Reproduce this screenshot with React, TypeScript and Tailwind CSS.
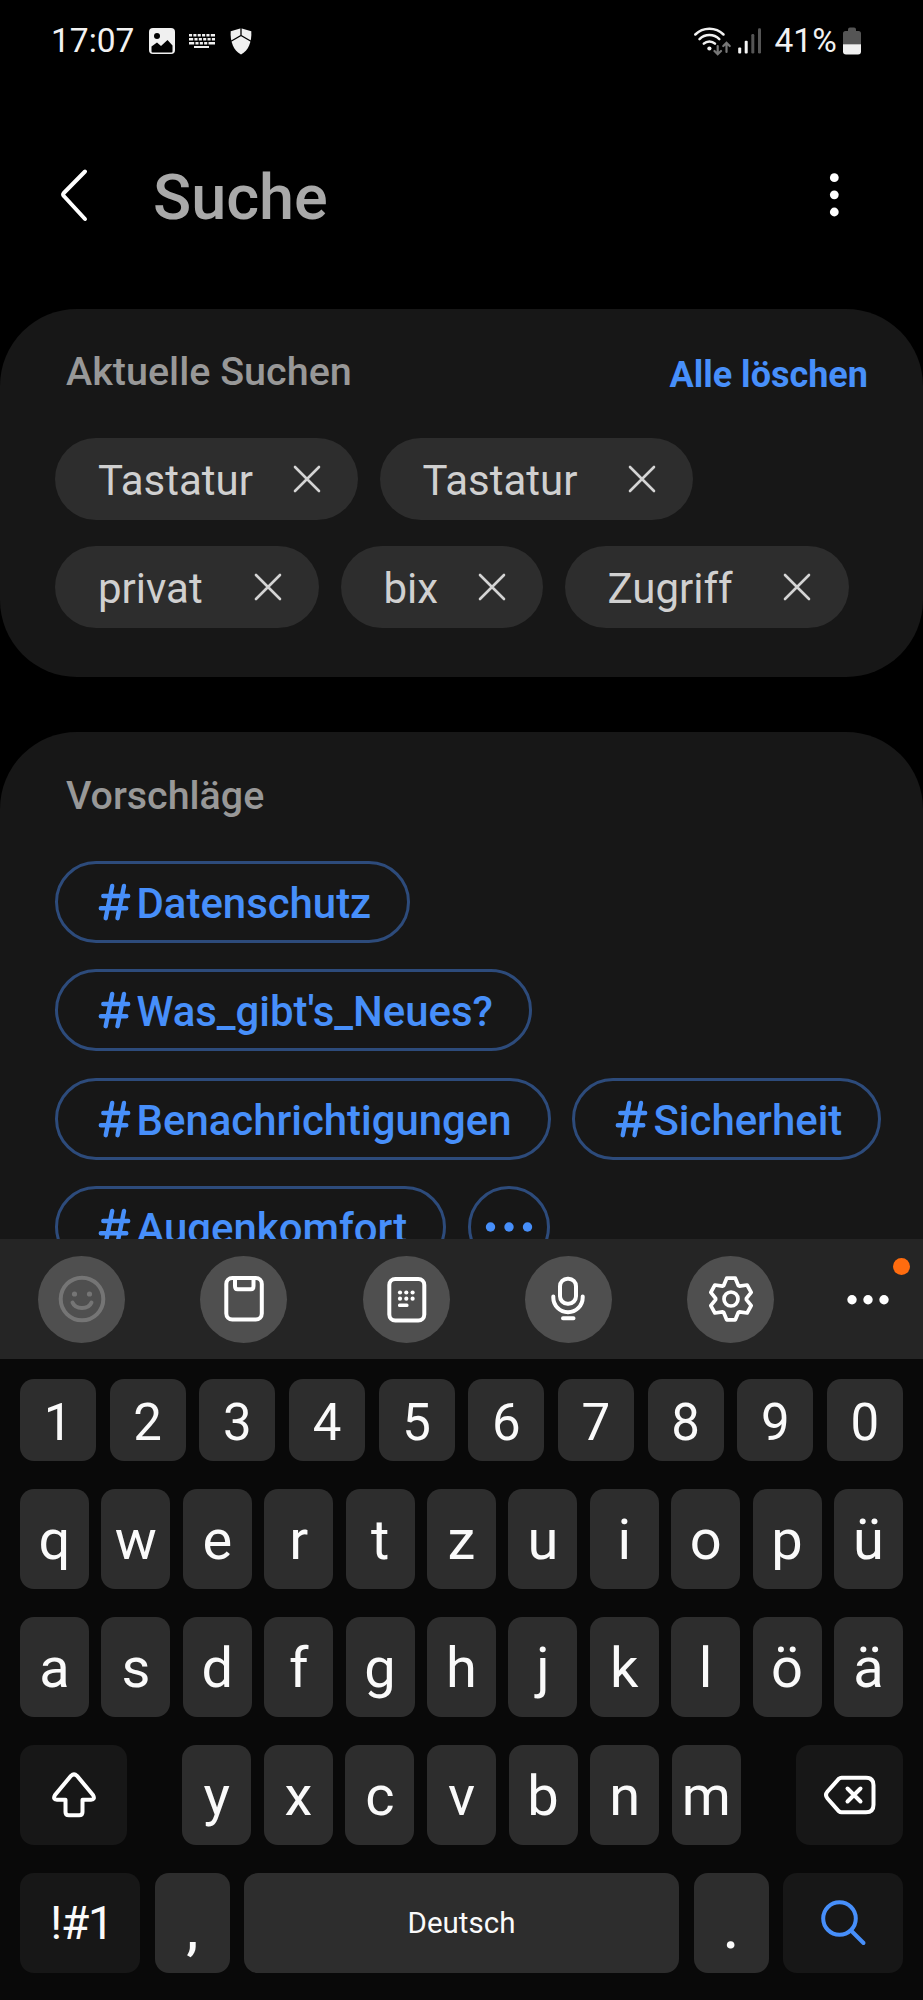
import type { ReactNode } from 'react';

function StatusBar() {
  return (
    <div className="flex h-[82px] shrink-0 items-center pl-[51px] text-[33.5px] leading-none text-[#f2f2f2]">
      <span className="w-[98px]">17:07</span>
      <svg width="26" height="26" viewBox="0 0 26 26" className="shrink-0">
        <rect width="26" height="26" rx="4" fill="#f0f0f0" />
        <path d="M2.5 18.5 8 14.5l4 3.5 6.5-6 5 5.5v6a1 1 0 0 1-1 1h-19a1 1 0 0 1-1-1Z" fill="#000" />
        <circle cx="8" cy="8" r="3" fill="#000" />
      </svg>
      <svg width="26" height="16" viewBox="0 0 26 16" className="ml-[14px] shrink-0" fill="none" stroke="#f0f0f0" strokeWidth="2.4">
        <path d="M0 2.2H26" strokeDasharray="3.1 1.25 3.1 1.25 3.1 1.25 3.1 1.25 3.1 1.25 5" />
        <path d="M0 6.2H26" strokeDasharray="4.2 1.25 3.1 1.25 3.1 1.25 3.1 1.25 3.1 1.25 5" />
        <path d="M0 10.2H26" strokeDasharray="5.2 1.25 3.1 1.25 3.1 1.25 3.1 1.25 8" />
        <path d="M5 14H20" strokeWidth="2" />
      </svg>
      <svg width="22" height="27" viewBox="0 0 22 27" className="ml-[15px] shrink-0">
        <path d="M11 .3 21.3 3.3C22 13 18.5 23 11 26.5 3.5 23 0 13 .7 3.3Z" fill="#f0f0f0" />
        <path d="M11 0v7.3M1 13.3 11 7.5l10 5.8" fill="none" stroke="#000" strokeWidth="1.3" />
      </svg>
      <svg width="38" height="30" viewBox="0 0 38 30" className="ml-[441px] shrink-0" fill="none" strokeLinecap="round">
        <g stroke="#f0f0f0" strokeWidth="2.5">
          <path d="M2.3 8.5A20 20 0 0 1 30.5 8.5" />
          <path d="M6.5 13.2A14 14 0 0 1 26.3 13.2" />
          <path d="M10.8 17.7A8 8 0 0 1 22 17.7" />
        </g>
        <circle cx="16.4" cy="22.5" r="2.1" fill="#f0f0f0" />
        <path d="M24.7 20v7.5M21.5 25l3.2 3.2L28 25M33.500 26v-8.5M30.3 20l3.2-3.2L36.7 20" stroke="#777" strokeWidth="2.2" />
      </svg>
      <svg width="24" height="26" viewBox="0 0 24 26" className="ml-[7px] shrink-0">
        <rect x=".2" y="19.5" width="3" height="6" rx="1" fill="#f5f5f5" />
        <rect x="6.7" y="12.8" width="3" height="12.7" rx="1" fill="#f5f5f5" />
        <rect x="13.3" y="6" width="3" height="19.5" rx="1.3" fill="#555" />
        <rect x="20" y=".3" width="3" height="25.2" rx="1.3" fill="#555" />
      </svg>
      <span className="ml-[12.5px] w-[68px]">41%</span>
      <svg width="18" height="28" viewBox="0 0 18 28" className="shrink-0">
        <path d="M5 2.500Q5 .5 7 .5h4Q13 .5 13 2.500V4h2.500Q18 4 18 6.500V17.500H0V6.500Q0 4 2.500 4H5Z" fill="#555" />
        <path d="M0 17.300h18v7.200q0 3-3 3H3q-3 0-3-3Z" fill="#f0f0f0" />
      </svg>
    </div>
  );
}

function Header() {
  return (
    <header className="flex h-[227px] shrink-0 items-center pl-[58px]">
      <svg width="32" height="56" viewBox="0 0 32 56" fill="none" stroke="#fff" strokeWidth="4" strokeLinecap="round" strokeLinejoin="round">
        <path d="M27 3.5 5.8 25q-1.500 1.500 0 3L27 51" />
      </svg>
      <h1 className="ml-[63px] w-[676px] pt-[3px] text-[63px] leading-none font-medium text-[#a9a9a9]">Suche</h1>
      <svg width="10" height="46" viewBox="0 0 10 46" fill="#fff">
        <circle cx="5.3" cy="4.7" r="4.4" />
        <circle cx="5.3" cy="21.8" r="4.4" />
        <circle cx="5.3" cy="39" r="4.4" />
      </svg>
    </header>
  );
}

function RecentChip({ label, width }: { label: string; width: string }) {
  return (
    <div className={`flex h-[82px] items-center justify-between rounded-full bg-[#2d2d2d] pr-[37.500px] pl-[43px] ${width}`}>
      <span className="pt-[3px] text-[42px] leading-none text-[#d0d0d0]">{label}</span>
      <svg width="28" height="28" viewBox="0 0 28 28" fill="none" stroke="#d4d4d4" strokeWidth="2.600" strokeLinecap="round">
        <path d="M2 2 26 26M26 2 2 26" />
      </svg>
    </div>
  );
}

function Tag({ label, width }: { label: string; width: string }) {
  return (
    <div className={`flex h-[82px] shrink-0 items-center rounded-full border-[3px] border-[#2d4b7b] pl-[39px] text-[#478ffa] ${width}`}>
      <svg width="36" height="40" viewBox="0 0 36 40" className="shrink-0" fill="none" stroke="currentColor" strokeWidth="4.4" strokeLinecap="round">
        <path d="M15.2 4 8.700 36.2M27 4 20.500 36.2M6.3 14H31.2M3.8 26.3H29.3" />
      </svg>
      <span className="ml-[3.500px] pt-[4px] text-[41.900px] leading-none font-medium">{label}</span>
    </div>
  );
}

function Tool({ children, dim }: { children: ReactNode; dim?: boolean }) {
  return (
    <div className={`flex size-[87px] items-center justify-center rounded-full bg-[#4f4f4f] ${dim ? 'text-[#757575]' : 'text-white'}`}>
      <svg width="50" height="50" viewBox="0 0 50 50" fill="none" stroke="currentColor" strokeWidth="4" strokeLinecap="round" strokeLinejoin="round">
        {children}
      </svg>
    </div>
  );
}

function Toolbar() {
  return (
    <div className="flex h-[120px] shrink-0 items-center gap-[75.300px] bg-[#252525] pl-[38px]">
      <Tool dim>
        <circle cx="25" cy="25" r="21.3" />
        <circle cx="17.5" cy="20" r="2.6" fill="currentColor" stroke="none" />
        <circle cx="32.5" cy="20" r="2.6" fill="currentColor" stroke="none" />
        <path d="M15.500 28.500a10 8 0 0 0 19 0" />
      </Tool>
      <Tool>
        <rect x="7.3" y="4" width="35.5" height="41.5" rx="6" />
        <path d="M16 5v7q0 3.300 2.500 3.300h13.500q2.500 0 2.500-3.300V5" />
      </Tool>
      <Tool>
        <rect x="8.3" y="5" width="35" height="41.5" rx="6" />
        <g fill="currentColor" stroke="none">
          <circle cx="19" cy="18.5" r="2.1" />
          <circle cx="25.3" cy="18.5" r="2.1" />
          <circle cx="31.6" cy="18.5" r="2.1" />
          <circle cx="19" cy="24.7" r="2.1" />
          <circle cx="25.3" cy="24.7" r="2.1" />
          <circle cx="31.6" cy="24.7" r="2.1" />
          <rect x="17" y="29.500" width="10.5" height="3.6" rx="1.5" />
        </g>
      </Tool>
      <Tool>
        <rect x="17" y="4.700" width="16" height="25" rx="7.500" />
        <path d="M10.300 22.500v1a14.700 14.700 0 0 0 29.400 0v-1M20 44.300h10.500" />
      </Tool>
      <Tool>
        <path
          d="M20.700 4.200h8.600l3 7.300 1.200.6 7.600-1.100 4.100 7.300-4.800 6v1.400l4.800 6-4.100 7.300-7.600-1.100-1.200.6-3 7.300h-8.600l-3-7.300-1.200-.6-7.600 1.100-4.100-7.300 4.800-6v-1.400l-4.800-6 4.100-7.300 7.600 1.100 1.200-.6Z"
          strokeWidth="3.700"
        />
        <circle cx="25" cy="25" r="7" strokeWidth="3.700" />
      </Tool>
      <div className="relative -ml-[3px] flex h-[87px] items-center">
        <svg width="46" height="12" viewBox="0 0 46 12" className="mt-[2px]" fill="#fff">
          <circle cx="6" cy="5.700" r="4.700" />
          <circle cx="22" cy="5.700" r="4.700" />
          <circle cx="38" cy="5.700" r="4.700" />
        </svg>
        <span className="absolute top-[2px] left-[46.500px] size-[17px] rounded-full bg-[#ff6c0f]" />
      </div>
    </div>
  );
}

function LetterKey({ label }: { label: string }) {
  return (
    <div className="flex h-[100px] w-[69px] items-center justify-center rounded-[14px] bg-[#2d2d2d] pt-[2px] text-[56px] leading-none">
      {label}
    </div>
  );
}

function Keyboard() {
  return (
    <div className="flex grow flex-col gap-[28px] bg-[#090909] px-[20px] pt-[20px] text-[#fafafa]">
      <div className="flex justify-between">
        {[...'1234567890'].map((d) => (
          <div key={d} className="flex h-[82px] w-[76px] items-center justify-center rounded-[14px] bg-[#2d2d2d] pt-[4px] text-[51px] leading-none">
            {d}
          </div>
        ))}
      </div>
      <div className="flex justify-between">
        {[...'qwertzuiopü'].map((c) => (
          <LetterKey key={c} label={c} />
        ))}
      </div>
      <div className="flex justify-between">
        {[...'asdfghjklöä'].map((c) => (
          <LetterKey key={c} label={c} />
        ))}
      </div>
      <div className="flex justify-between">
        <div className="flex h-[100px] w-[107px] items-center justify-center rounded-[14px] bg-[#171717]">
          <svg width="46" height="48" viewBox="0 0 46 48" fill="none" stroke="#fff" strokeWidth="4" strokeLinejoin="round">
            <path d="M20 4.800q3-3 6 0L42 24q2.500 4.500-2 4.800H31.500V41q0 3.300-3.300 3.300h-10.400q-3.300 0-3.300-3.300V28.800H6Q1.500 28.500 4 24Z" />
          </svg>
        </div>
        <div className="flex gap-[12.600px]">
          {[...'yxcvbnm'].map((c) => (
            <LetterKey key={c} label={c} />
          ))}
        </div>
        <div className="flex h-[100px] w-[107px] items-center justify-center rounded-[14px] bg-[#171717]">
          <svg width="54" height="42" viewBox="0 0 54 42" fill="none" stroke="#fff" strokeWidth="4" strokeLinecap="round" strokeLinejoin="round">
            <path d="M18.500 3.700H43q7.500 0 7.500 7.500v19.600q0 7.500-7.500 7.500H18.500q-1.500 0-2.600-1L4.500 24.500q-3-3.500 0-7L15.900 4.700q1.100-1 2.600-1Z" />
            <path d="m24.500 14.500 13 13M37.500 14.500l-13 13" />
          </svg>
        </div>
      </div>
      <div className="flex justify-between">
        <div className="flex h-[100px] w-[120px] items-center justify-center rounded-[14px] bg-[#171717] pl-[3px] text-[46px] leading-none tracking-[-1.200px]">!#1</div>
        <div className="flex h-[100px] w-[75px] items-center justify-center rounded-[14px] bg-[#2d2d2d] pt-[12px] pl-[1px] text-[55px] leading-none font-medium">,</div>
        <div className="flex h-[100px] w-[435px] items-center justify-center rounded-[14px] bg-[#2d2d2d] pt-[2px] text-[29.500px] leading-none">Deutsch</div>
        <div className="flex h-[100px] w-[75px] items-center justify-center rounded-[14px] bg-[#2d2d2d] pt-[12px] text-[55px] leading-none font-medium">.</div>
        <div className="flex h-[100px] w-[120px] items-center justify-center rounded-[14px] bg-[#171717]">
          <svg width="48" height="48" viewBox="0 0 48 48" fill="none" stroke="#478ffa" strokeWidth="4" strokeLinecap="round" className="-mt-[2px]">
            <circle cx="20.500" cy="20.500" r="16.300" />
            <path d="M32 32.500 44.500 45" />
          </svg>
        </div>
      </div>
    </div>
  );
}

export default function App() {
  return (
    <div className="flex h-[2000px] w-[923px] flex-col overflow-hidden bg-black font-['Roboto',sans-serif]">
      <StatusBar />
      <Header />
      <section className="h-[368px] shrink-0 rounded-[77px] bg-[#171717]">
        <div className="flex h-[129px] items-center justify-between pr-[55px] pl-[66px] leading-none">
          <h2 className="pb-[3px] text-[39.500px] leading-none font-medium text-[#989898]">Aktuelle Suchen</h2>
          <button className="pt-[2px] text-[36px] leading-none font-bold text-[#478ffa]">Alle löschen</button>
        </div>
        <div className="flex flex-col gap-[26px] pl-[55px]">
          <div className="flex gap-[21.500px]">
            <RecentChip label="Tastatur" width="w-[303px]" />
            <RecentChip label="Tastatur" width="w-[313.500px]" />
          </div>
          <div className="flex gap-[21.500px]">
            <RecentChip label="privat" width="w-[264px]" />
            <RecentChip label="bix" width="w-[202.500px]" />
            <RecentChip label="Zugriff" width="w-[284px]" />
          </div>
        </div>
      </section>
      <section className="mt-[55px] h-[507px] shrink-0 overflow-hidden rounded-t-[77px] bg-[#171717]">
        <div className="flex h-[128.500px] items-center pl-[66px]">
          <h2 className="pb-[1px] text-[39.400px] leading-none font-medium text-[#989898]">Vorschläge</h2>
        </div>
        <div className="flex flex-col gap-[26.500px] pl-[55px]">
          <Tag label="Datenschutz" width="w-[354.500px]" />
          <Tag label="Was_gibt's_Neues?" width="w-[477px]" />
          <div className="flex gap-[21.500px]">
            <Tag label="Benachrichtigungen" width="w-[495.500px]" />
            <Tag label="Sicherheit" width="w-[309px]" />
          </div>
          <div className="flex gap-[21.500px]">
            <Tag label="Augenkomfort" width="w-[391px]" />
            <div className="flex size-[82px] items-center justify-center rounded-full border-[3px] border-[#2d4b7b]">
              <svg width="48" height="12" viewBox="0 0 48 12" fill="#478ffa">
                <circle cx="5.500" cy="6" r="4.700" />
                <circle cx="24" cy="6" r="4.700" />
                <circle cx="42.500" cy="6" r="4.700" />
              </svg>
            </div>
          </div>
        </div>
      </section>
      <Toolbar />
      <Keyboard />
    </div>
  );
}
